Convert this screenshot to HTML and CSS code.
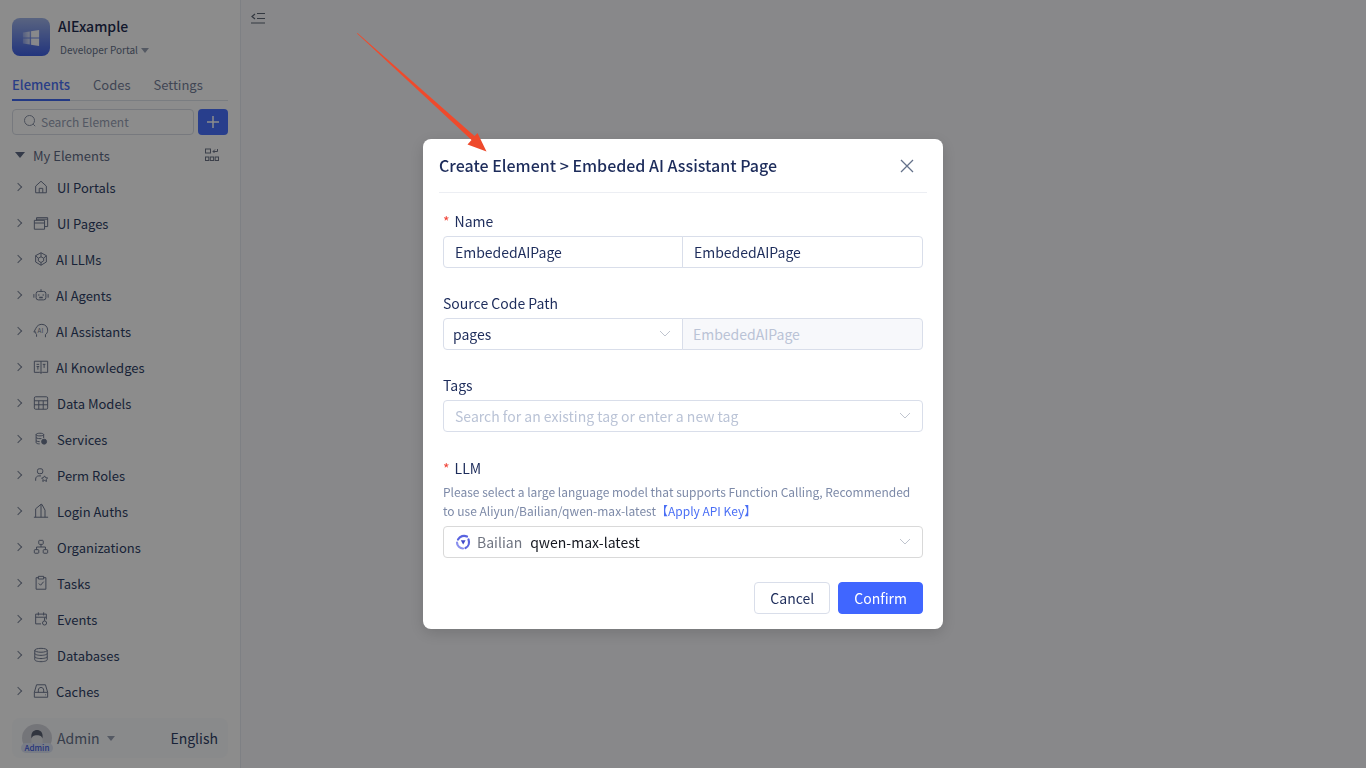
FILE: index.html
```html
<!DOCTYPE html>
<html lang="en">
<head>
  <meta charset="UTF-8" />
  <title>AIExample Developer Portal</title>
  <link rel="stylesheet" href="styles.css">
</head>
<body>

<div class="app">
  <aside class="sidebar">
    <div class="brand">
      <div class="logo">
        <svg width="18" height="18" viewBox="0 0 20 20"><defs><linearGradient id="win" x1="0" x2="1" y1="0" y2="0"><stop offset="0" stop-color="#fff" stop-opacity=".25"/><stop offset=".6" stop-color="#fff" stop-opacity=".95"/></linearGradient></defs><path fill="url(#win)" d="M1 4l7.600-1.200v6.600H1zM9.800 2.600L19 1v8.400H9.800zM1 10.600h7.600v6.600L1 16zM9.800 10.600H19V19l-9.200-1.500z"/></svg>
      </div>
      <div class="brand-text">
        <div class="brand-name">AIExample</div>
        <div class="brand-sub">Developer Portal <span class="caret"></span></div>
      </div>
    </div>

    <div class="tabs">
      <span class="tab active">Elements</span>
      <span class="tab">Codes</span>
      <span class="tab">Settings</span>
    </div>

    <div class="search-row">
      <div class="search">
        <svg width="14" height="14" viewBox="0 0 14 14" fill="none" stroke="#8a93a6" stroke-width="1"><circle cx="6.500" cy="6.500" r="5"/><path d="M10.200 10.200l2 2"/></svg>
        <span>Search Element</span>
      </div>
      <button class="add-btn">
        <svg width="12" height="12" viewBox="0 0 12 12" stroke="#fff" stroke-width="1.500"><path d="M6 0v12M0 6h12"/></svg>
      </button>
    </div>

    <div class="group-head">
      <span class="group-caret"></span>
      <span class="group-name">My Elements</span>
      <svg class="group-icon" width="14" height="14" viewBox="0 0 14 14" fill="none" stroke="#6d7688"><rect x=".5" y="1" width="5" height="4"/><path d="M8 3.500h4.500V1M10 1.500L8 3.500l1.500 1.500"/><rect x=".5" y="9" width="3.300" height="3.500"/><rect x="5.300" y="9" width="3.300" height="3.500"/><rect x="10.200" y="9" width="3.300" height="3.500"/></svg>
    </div>

    <ul class="tree">
      <li class="tree-item"><span class="chev"></span>
        <svg class="ico" viewBox="0 0 18 18"><path d="M3 8l6-5.500L15 8v7.500H3zM7 15.500V10.500h4v5"/></svg>
        <span>UI Portals</span></li>
      <li class="tree-item"><span class="chev"></span>
        <svg class="ico" viewBox="0 0 18 18"><path d="M1.500 6h11.500v10H1.500zM1.500 9h11.500M4 6V3h12.500v10H13M4 4.700h12.500"/></svg>
        <span>UI Pages</span></li>
      <li class="tree-item"><span class="chev"></span>
        <svg class="ico" viewBox="0 0 18 18"><path d="M9 2l6 3.200v7.200L9 16l-6-3.600V5.200zM9 6.500l3 1.600v3L9 13l-3-1.900v-3zM9 2v4.500M3 5.200l3 2.900M15 5.200l-3 2.900M9 13v3"/></svg>
        <span class="tight">AI LLMs</span></li>
      <li class="tree-item"><span class="chev"></span>
        <svg class="ico" viewBox="0 0 18 18"><rect x="3.500" y="5" width="11" height="9.500" rx="2.500"/><path d="M9 5V2.500M1 8v4M17 8v4"/><path stroke-width="1.600" d="M6.500 8.500v1.200M11.500 8.500v1.200M7 11.800h4"/></svg>
        <span class="tight">AI Agents</span></li>
      <li class="tree-item"><span class="chev"></span>
        <svg class="ico" viewBox="0 0 18 18"><path d="M4 15.500v-2.500C3 12 3 11 3 10l-2 0.200L3.200 6C4.500 3 7 1.500 10 1.500c4 0 6.500 3 6.500 6.500 0 2.500-1 4-2.500 5v3"/><text x="5.200" y="11" class="ico-text">AI</text></svg>
        <span class="tight">AI Assistants</span></li>
      <li class="tree-item"><span class="chev"></span>
        <svg class="ico" viewBox="0 0 18 18"><path d="M1.500 2.500h15v12.500h-6L9 16l-1.500-1h-6zM9 2.500V16M4 6h3M4 8.500h3M11 6h3M12.500 6v4M5.500 8.500V12"/></svg>
        <span class="tight">AI Knowledges</span></li>
      <li class="tree-item"><span class="chev"></span>
        <svg class="ico" viewBox="0 0 18 18"><rect x="1.500" y="2" width="15" height="14" rx="1.500"/><path d="M1.500 6.500h15M1.500 11h15M6.500 6.500V16M11.500 6.500V16"/></svg>
        <span>Data Models</span></li>
      <li class="tree-item"><span class="chev"></span>
        <svg class="ico" viewBox="0 0 18 18"><path d="M3.500 4c0-2 8.500-2 8.500 0v4M3.500 4v9c0 1 2 1.500 4 1.500M3.500 4c0 2 8.500 2 8.500 0M3.500 7.500c1 1 4 1.300 6 1M3.500 11c1 .8 2.500 1 4 1"/><circle cx="12.500" cy="12" r="2.800" fill="#6e7890"/></svg>
        <span>Services</span></li>
      <li class="tree-item"><span class="chev"></span>
        <svg class="ico" viewBox="0 0 18 18"><rect x="5" y="2" width="6" height="5.500" rx="2"/><path d="M3 15.500v-2c0-2 1.500-3.500 3.500-3.500H9M13 10l1.200 2 2.300.4-1.700 1.600.4 2.200-2.200-1.100-2 1.100.3-2.200-1.600-1.600 2.200-.4z"/></svg>
        <span>Perm Roles</span></li>
      <li class="tree-item"><span class="chev"></span>
        <svg class="ico" viewBox="0 0 18 18"><path d="M1 16h16M3 16V6.500L9 1.500M9 1.500V16M9 1.500l1 0 3.500 6.500V16"/></svg>
        <span>Login Auths</span></li>
      <li class="tree-item"><span class="chev"></span>
        <svg class="ico" viewBox="0 0 18 18"><rect x="6.500" y="1.500" width="5" height="4.500" rx=".8"/><rect x="1.500" y="12" width="5" height="4" rx=".8"/><rect x="11.500" y="12" width="5" height="4" rx=".8"/><path d="M9 6v3M4 12V9h10v3"/></svg>
        <span>Organizations</span></li>
      <li class="tree-item"><span class="chev"></span>
        <svg class="ico" viewBox="0 0 18 18"><path d="M6 3H3.500v13h11V3H12M6 1.500h6v3H6zM6.500 9.500l2 2 3.500-4"/></svg>
        <span>Tasks</span></li>
      <li class="tree-item"><span class="chev"></span>
        <svg class="ico" viewBox="0 0 18 18"><path d="M9 14.500H3V3.500h12v6M3 7h12M6 1.500v3.500M12 1.500v3.500"/><circle cx="13" cy="13.500" r="2.300"/><path d="M13 7.500v3.500"/></svg>
        <span>Events</span></li>
      <li class="tree-item"><span class="chev"></span>
        <svg class="ico" viewBox="0 0 18 18"><ellipse cx="9" cy="3.700" rx="7" ry="2.200"/><path d="M2 3.700v10.600c0 1.200 3 2.200 7 2.200s7-1 7-2.200V3.700M2 7.200c0 1.200 3 2.200 7 2.200s7-1 7-2.200M2 10.800c0 1.200 3 2.200 7 2.200s7-1 7-2.200"/></svg>
        <span>Databases</span></li>
      <li class="tree-item"><span class="chev"></span>
        <svg class="ico" viewBox="0 0 18 18"><path d="M4 2h10l2.500 8.500v5.500h-15v-5.500zM1.500 10.500h15M6 10.500V8c0-4 6-4 6 0v2.500M13.500 13.300h.8"/></svg>
        <span class="tight">Caches</span></li>
    </ul>

    <div class="user-bar">
      <div class="avatar">
        <svg width="30" height="28" viewBox="0 0 30 28"><path fill="#e4e5ea" d="M9.500 14c0-3 2.500-5 5.500-5s5.500 2 5.500 5v5h-11z"/><path fill="#5a6274" d="M9.500 14.500C8.500 8 12 6 15 6s6.500 2 5.500 8.500c-1-2.500-2-3.300-5.500-3.300s-4.500.8-5.500 3.300z"/></svg>
        <span class="avatar-tag">Admin</span>
      </div>
      <span class="user-name">Admin</span>
      <span class="caret user-caret"></span>
      <span class="lang">English</span>
    </div>
  </aside>

  <main class="content">
    <svg class="collapse" width="14" height="12" viewBox="0 0 14 12" fill="none" stroke="#5e6675" stroke-width="1.200"><path d="M6 1.500h8M0 11h14M6 6.500h8M4 2L1 4.500 4 7"/></svg>
  </main>
</div>

<div class="overlay">
  <div class="modal">
    <div class="modal-head">
      <h2>Create Element &gt; Embeded AI Assistant Page</h2>
      <svg class="close" width="14" height="14" viewBox="0 0 14 14" stroke="#64718a" stroke-width="1.300"><path d="M1 1l12 12M13 1L1 13"/></svg>
    </div>

    <div class="form">
      <div class="field">
        <label class="label"><i>*</i>Name</label>
        <div class="input-group">
          <div class="input half">EmbededAIPage</div>
          <div class="input half joined">EmbededAIPage</div>
        </div>
      </div>

      <div class="field">
        <label class="label">Source Code Path</label>
        <div class="input-group">
          <div class="input half select-path">pages
            <svg class="arrow-down" viewBox="0 0 12 8"><path d="M1 1l5 5 5-5"/></svg>
          </div>
          <div class="input half joined disabled">EmbededAIPage</div>
        </div>
      </div>

      <div class="field tags">
        <label class="label">Tags</label>
        <div class="input placeholder">Search for an existing tag or enter a new tag
          <svg class="arrow-down" viewBox="0 0 12 8"><path d="M1 1l5 5 5-5"/></svg>
        </div>
      </div>

      <div class="field llm">
        <label class="label"><i>*</i>LLM</label>
        <p class="hint">Please select a large language model that supports Function Calling, Recommended to use Aliyun/Bailian/qwen-max-latest<a>【Apply API Key】</a></p>
        <div class="input llm-select">
          <svg class="llm-logo" width="16" height="16" viewBox="0 0 16 16" fill="none" stroke-width="2.200" stroke-linecap="round">
            <path stroke="#5a64e0" d="M3 5.500C5 2 9 1 12 2.500"/>
            <path stroke="#5a64e0" d="M13.500 5.500c1.300 3.500 0 7-3 8.500"/>
            <path stroke="#8a90ee" d="M8 14.500C5 14.500 2 12 2 8.500"/>
            <path fill="#3f48c8" d="M5.800 6.300h4.800L8.200 10.600z"/>
          </svg>
          <span class="provider">Bailian</span>
          <span class="model">qwen-max-latest</span>
          <svg class="arrow-down" viewBox="0 0 12 8"><path d="M1 1l5 5 5-5"/></svg>
        </div>
      </div>
    </div>

    <div class="modal-foot">
      <button class="btn">Cancel</button>
      <button class="btn primary">Confirm</button>
    </div>
  </div>

  <svg class="pointer" width="140" height="125" viewBox="0 0 140 125"><path fill="#ee4a2c" d="M0 0.500L.5 0 117.500 103 120.500 100 129.500 118.500 110.500 111.500 114.500 107z"/></svg>
</div>

</body>
</html>
```

FILE: styles.css
```css
* {
  box-sizing: border-box;
}
html, body {
  height: 100%;
}
body {
  margin: 0;
  font-family: "Noto Sans CJK SC", "Noto Sans", sans-serif;
  color: #2f3f66;
  overflow: hidden;
}
.app {
  display: flex;
  height: 768px;
}

/* sidebar */
.sidebar {
  width: 241px;
  flex: none;
  padding: 18px 12px 10px;
  background: #fff;
  border-right: 1px solid #e6e9f0;
  display: flex;
  flex-direction: column;
}
.brand {
  display: flex;
  gap: 8px;
  height: 38px;
}
.logo {
  width: 38px;
  height: 38px;
  padding-top: 1px;
  border-radius: 8px;
  background: linear-gradient(#a2b6ea, #3f60e4);
  display: flex;
  align-items: center;
  justify-content: center;
}
.brand-name {
  margin-top: -1px;
  font-size: 14px;
  font-weight: 500;
  line-height: 18px;
  color: #1f2c50;
}
.brand-sub {
  margin: 7px 0 0 2px;
  font-size: 10px;
  line-height: 16px;
  color: #65718a;
}
.caret {
  display: inline-block;
  margin-left: 1px;
  border: 4px solid transparent;
  border-top: 5px solid #9aa3b5;
  border-bottom: 0;
  vertical-align: 1px;
}
.tabs {
  display: flex;
  gap: 23px;
  margin-top: 18px;
  height: 27px;
  border-bottom: 1px solid #dfe3ec;
}
.tab {
  font-size: 13px;
  line-height: 22px;
  height: 27px;
  color: #76809a;
}
.tab.active {
  color: #4c72f5;
  font-weight: 500;
  border-bottom: 2px solid #4069f0;
}
.search-row {
  display: flex;
  gap: 4px;
  margin-top: 8px;
}
.search {
  flex: 1;
  height: 26px;
  border: 1px solid #d9dde6;
  border-radius: 4px;
  padding: 0 10px 2px;
  display: flex;
  align-items: center;
  gap: 4px;
  font-size: 12px;
  color: #98a1b5;
}
.add-btn {
  width: 30px;
  height: 26px;
  padding: 0;
  border: none;
  border-radius: 4px;
  background: #4a72ff;
  display: flex;
  align-items: center;
  justify-content: center;
}
.group-head {
  display: flex;
  align-items: center;
  height: 20px;
  margin-top: 10px;
  padding-left: 3px;
  font-size: 13px;
}
.group-caret {
  border: 5px solid transparent;
  border-top: 6px solid #5f6b85;
  border-bottom: 0;
}
.group-name {
  margin-left: 8px;
  color: #5f6b85;
}
.group-icon {
  margin-left: auto;
  margin-right: 9px;
}
.tree {
  list-style: none;
  margin: 4px 0 0;
  padding: 0;
  flex: 1;
}
.tree-item {
  display: flex;
  align-items: center;
  height: 36px;
  font-size: 13px;
  color: #2f3f66;
}
.tight {
  margin-left: -1px;
}
.chev {
  width: 6px;
  height: 6px;
  margin: 0 0 0 3px;
  border-top: 1px solid #7e889c;
  border-right: 1px solid #7e889c;
  transform: rotate(45deg);
}
.ico {
  width: 16px;
  height: 16px;
  margin: 0 8px 0 12px;
  fill: none;
  stroke: #6e7890;
  stroke-width: 1.100;
  flex: none;
}
.ico-text {
  font-size: 7px;
  fill: #6e7890;
  stroke: none;
}
.user-bar {
  display: flex;
  align-items: center;
  height: 40px;
  padding: 0 10px;
  border-radius: 8px;
  background: #fafbfd;
}
.avatar {
  position: relative;
  width: 30px;
  height: 28px;
  border-radius: 50%;
  background: #d4d6dd;
  flex: none;
}
.avatar svg {
  display: block;
}
.avatar-tag {
  position: absolute;
  left: -1px;
  right: -1px;
  bottom: -1px;
  height: 10px;
  border-radius: 5px;
  background: #dde3f5;
  color: #4460e0;
  font-size: 8px;
  font-weight: 500;
  line-height: 10px;
  text-align: center;
}
.user-name {
  margin-left: 5px;
  font-size: 14px;
  color: #65718a;
}
.user-caret {
  margin-left: 7px;
}
.lang {
  margin-left: auto;
  font-size: 14px;
  color: #2f3f66;
}

/* main area */
.content {
  flex: 1;
  background: #f7f8fc;
  padding: 12px 10px;
}
.collapse {
  display: block;
}

/* dialog */
.overlay {
  position: fixed;
  inset: 0;
  background: rgba(0, 0, 0, .45);
  display: flex;
  align-items: center;
  justify-content: center;
}
.modal {
  width: 520px;
  height: 490px;
  background: #fff;
  border-radius: 8px;
  padding: 0 16px;
  box-shadow: 0 4px 16px rgba(0, 0, 0, .15);
}
.modal-head {
  height: 54px;
  display: flex;
  align-items: center;
  justify-content: space-between;
  border-bottom: 1px solid #eceef3;
  padding-right: 13px;
}
.modal-head h2 {
  margin: -2px 0 0;
  font-size: 16px;
  font-weight: 500;
  color: #1d2c5b;
}
.form {
  padding: 18px 4px 0;
}
.field {
  margin-bottom: 25px;
}
.field.tags {
  margin-bottom: 26px;
}
.label {
  display: block;
  height: 25px;
  font-size: 14px;
  line-height: 20px;
  color: #1d2c5b;
}
.label i {
  margin: 0 5px 0 0;
  font-style: normal;
  color: #f04438;
}
.input-group {
  display: flex;
}
.input {
  position: relative;
  height: 32px;
  padding: 0 11px;
  border: 1px solid #d9deea;
  border-radius: 4px;
  font-size: 14px;
  line-height: 30px;
  color: #1d2c5b;
}
.half {
  width: 240px;
  border-radius: 4px 0 0 4px;
}
.joined {
  width: 241px;
  margin-left: -1px;
  border-radius: 0 4px 4px 0;
}
.select-path {
  padding-left: 9px;
}
.disabled {
  padding-left: 10px;
  background: #f7f8fb;
  color: #bac3d6;
}
.placeholder {
  color: #bac3d6;
}
.arrow-down {
  position: absolute;
  right: 11px;
  top: 11px;
  width: 12px;
  height: 8px;
  fill: none;
  stroke: #c0c5cf;
  stroke-width: 1;
}
.llm {
  margin-bottom: 24px;
}
.llm .label {
  height: 24px;
}
.hint {
  margin: 0 0 6px;
  font-size: 12px;
  line-height: 19px;
  color: #7d8aa8;
}
.hint a {
  display: inline-block;
  color: #4a6ff5;
}
.llm-select {
  display: flex;
  align-items: center;
  border-color: #d9d9d9;
}
.llm-logo {
  margin-right: 6px;
}
.provider {
  color: #6f7480;
  margin-right: 8px;
}
.model {
  color: #14171f;
}
.modal-foot {
  display: flex;
  justify-content: flex-end;
  gap: 8px;
  padding-right: 4px;
}
.btn {
  height: 32px;
  padding: 0 15px;
  border: 1px solid #d9deea;
  border-radius: 4px;
  background: #fff;
  font-family: inherit;
  font-size: 14px;
  color: #1d2c5b;
}
.btn.primary {
  border-color: #4066ff;
  background: #4066ff;
  color: #fff;
}
.pointer {
  position: absolute;
  left: 357px;
  top: 33px;
}
```
